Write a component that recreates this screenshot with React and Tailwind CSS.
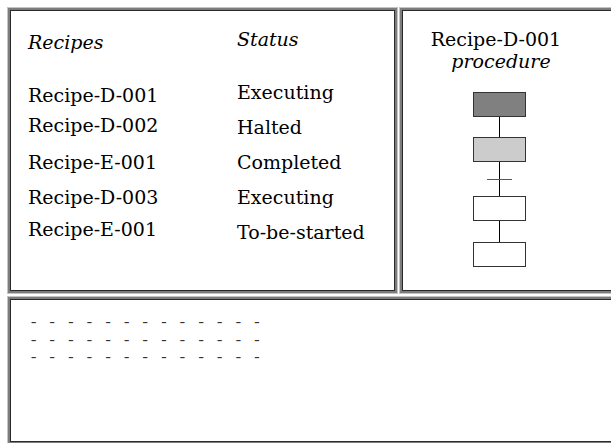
const serif = { fontFamily: '"DejaVu Serif", "Liberation Serif", serif' };

const recipes = [
  { name: "Recipe-D-001", mt: "mt-[33px]" },
  { name: "Recipe-D-002", mt: "mt-[10px]" },
  { name: "Recipe-E-001", mt: "mt-[17px]" },
  { name: "Recipe-D-003", mt: "mt-[15px]" },
  { name: "Recipe-E-001", mt: "mt-[12px]" },
];

const statuses = ["Executing", "Halted", "Completed", "Executing", "To-be-started"];

function Panel({ className = "", children }) {
  return (
    <div
      className={`border-2 border-[#7c7c7c] shadow-[0_0_0_1px_#c4c4c4,inset_0_0_0_1px_#2a2a2a] bg-white ${className}`}
    >
      {children}
    </div>
  );
}

function Step({ fill }) {
  return <div className={`w-[53px] h-[25px] border border-[#333] ${fill}`} />;
}

function Link({ h, tick }) {
  return (
    <div className={`relative w-px bg-black ${h}`}>
      {tick && <div className="absolute left-[-12px] top-[17px] w-[25px] h-px bg-[#555]" />}
    </div>
  );
}

export default function App() {
  return (
    <div className="w-[611px] h-[443px] overflow-hidden bg-white text-black" style={serif}>
      <div className="w-[660px] pl-[8px] pt-[8px] flex flex-col gap-[4px]">
        <div className="flex gap-[3px] h-[285px]">
          <Panel className="w-[389px] flex pl-[18px] text-[19px] leading-[20px]">
            <div className="w-[209px] flex flex-col">
              <div className="mt-[22px] italic">Recipes</div>
              {recipes.map((r, i) => (
                <div key={i} className={r.mt}>{r.name}</div>
              ))}
            </div>
            <div className="flex flex-col">
              <div className="mt-[19px] italic">Status</div>
              {statuses.map((s, i) => (
                <div key={i} className={i === 0 ? "mt-[33px]" : "mt-[15px]"}>{s}</div>
              ))}
            </div>
          </Panel>
          <Panel className="w-[240px]">
            <div className="w-[188px] flex flex-col items-center text-[19px] leading-[20px]">
              <div className="mt-[19px]">Recipe-D-001</div>
              <div className="italic mt-[2px] ml-[10px]">procedure</div>
              <div className="mt-[21px] flex flex-col items-center ml-[6px]">
                <Step fill="bg-[#808080]" />
                <Link h="h-[20px]" />
                <Step fill="bg-[#cccccc]" />
                <Link h="h-[34px]" tick />
                <Step fill="bg-white" />
                <Link h="h-[21px]" />
                <Step fill="bg-white" />
              </div>
            </div>
          </Panel>
        </div>
        <Panel className="h-[147px] pl-[19px] pt-[16px]">
          <div
            className="text-[15.5px] leading-[17.5px] text-[#333]"
            style={{ fontFamily: '"Liberation Mono", monospace' }}
          >
            <div>- - - - - - - - - - - - -</div>
            <div>- - - - - - - - - - - - -</div>
            <div>- - - - - - - - - - - - -</div>
          </div>
        </Panel>
      </div>
    </div>
  );
}
